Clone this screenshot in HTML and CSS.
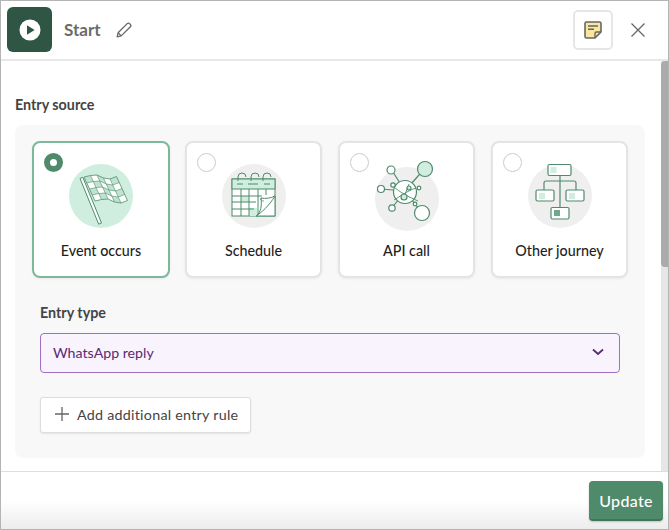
FILE: index.html
```html
<!DOCTYPE html>
<html lang="en">
<head>
    <meta name="viewport" content="width=device-width, initial-scale=1.0" />
    <title>Start</title>
    <link rel="stylesheet" href="styles.css">
</head>
<body>
    <div class="window">
        <header class="top-bar">
            <div class="step-icon">
                <svg width="22" height="22" viewBox="0 0 22 22"><circle cx="11" cy="11" r="10.5" fill="#fff"/><path d="M8 6.200v9.600l7.600-4.800z" fill="#2f5645"/></svg>
            </div>
            <span class="step-title">Start</span>
            <svg class="edit-icon" width="18" height="18" viewBox="0 0 18 18" fill="none" stroke="#666" stroke-width="1.300" stroke-linejoin="round"><path d="M2.200 15.800l.9-4L12.200 2.600a1.600 1.600 0 0 1 2.300 0l.9.9a1.600 1.600 0 0 1 0 2.300L6.200 14.900z"/><path d="M3.100 11.800l3.100 3.100"/></svg>
            <button class="note-button">
                <svg width="18" height="18" viewBox="0 0 18 18"><path d="M1 2.500A1.500 1.500 0 0 1 2.500 1h13A1.500 1.500 0 0 1 17 2.500V11l-6 6H2.500A1.500 1.500 0 0 1 1 15.500z" fill="#f9e79f" stroke="#666" stroke-width="1.600" stroke-linejoin="round"/><path d="M4 5h10M4 8.200h6" stroke="#666" stroke-width="1.400"/><path d="M11 17v-4.500a1.500 1.500 0 0 1 1.500-1.500H17" fill="none" stroke="#666" stroke-width="1.400"/></svg>
            </button>
            <svg class="close-icon" width="14" height="14" viewBox="0 0 14 14" stroke="#666" stroke-width="1.300"><path d="M.5.500l13 13M13.500.500l-13 13"/></svg>
        </header>

        <div class="body">
            <main class="scroll-area">
                <h2 class="section-title">Entry source</h2>
                <section class="panel">
                    <div class="cards">
                        <div class="card selected">
                            <span class="radio"></span>
                            <svg class="card-icon" width="64" height="64" viewBox="0 0 64 64" fill="none" stroke="#4f8a6b" stroke-width=".8">
                                <circle cx="32" cy="32" r="32" fill="#cfeee0" stroke="none"/>
                                <!-- flag cloth, checks then grid -->
                                <path d="M15 13L21.500 11.500 28 11 34.500 14 41 15 47.500 12.500 58.500 36.500 52 39 45.500 38 39 35 32.500 35.500 26 37z" fill="#fff" stroke="none"/>
                                <path d="M15 13L21.500 11.500 24.250 17.500 17.750 19zM28 11L34.500 14 37.250 20 30.750 17zM41 15L47.500 12.500 50.250 18.500 43.750 21zM24.250 17.500L30.750 17 33.500 23 27 23.500zM37.250 20L43.750 21 46.500 27 40 26zM20.500 25L27 23.500 29.750 29.500 23.250 31zM33.500 23L40 26 42.750 32 36.250 29zM46.500 27L53 24.500 55.750 30.500 49.250 33zM29.750 29.500L36.250 29 39 35 32.500 35.500zM42.750 32L49.250 33 52 39 45.500 38z" fill="#bfe3d1" stroke="none"/>
                                <path d="M15 13L21.500 11.500 28 11 34.500 14 41 15 47.500 12.500 58.500 36.500 52 39 45.500 38 39 35 32.500 35.500 26 37z"/>
                                <path d="M17.750 19L24.250 17.500 30.750 17 37.250 20 43.750 21 50.250 18.500M20.500 25L27 23.500 33.500 23 40 26 46.500 27 53 24.500M23.250 31L29.750 29.500 36.250 29 42.750 32 49.250 33 55.750 30.500M21.500 11.500L32.500 35.500M28 11L39 35M34.500 14L45.500 38M41 15L52 39" stroke-width=".6"/>
                                <path d="M11 14.500l2.800-1.200L32.500 59l-2.800 1.200z" fill="#fff" stroke-linejoin="round" stroke-width="1"/>
                            </svg>
                            <span class="card-label">Event occurs</span>
                        </div>
                        <div class="card">
                            <span class="radio"></span>
                            <svg class="card-icon" width="64" height="64" viewBox="0 0 64 64" fill="none" stroke="#4f8a6b" stroke-width="1">
                                <circle cx="32" cy="32" r="32" fill="#efefef" stroke="none"/>
                                <rect x="10" y="15" width="43" height="37" fill="#fff"/>
                                <rect x="10" y="15" width="43" height="10" fill="#cfeee0"/>
                                <path d="M19 32h8v6h-8zM27 44h8v8h-8z" fill="#cfeee0" stroke="none"/>
                                <path d="M10 32h30M10 38h24M10 45h22M19 25v27M27 25v27M36 25v27M44 25v6"/>
                                <path d="M15 20h6M26 20h10M42 20h6" stroke-width="1.200"/>
                                <path d="M16 17v-4a4 4 0 0 1 8 0M29 17v-4a4 4 0 0 1 8 0M41 17v-4a4 4 0 0 1 8 0"/>
                                <path d="M34 52c5-3 6-11 5-18 5 1 10 0 14-2-1 7-8 15-19 20z" fill="#fff"/>
                                <path d="M34 52c5-3 13-10 19-20v20z" fill="#fff"/>
                                <path d="M39 34c-1 2 1 3 3 3" stroke-width=".8"/>
                            </svg>
                            <span class="card-label">Schedule</span>
                        </div>
                        <div class="card">
                            <span class="radio"></span>
                            <svg class="card-icon" width="64" height="64" viewBox="0 0 64 64" fill="none" stroke="#4f8a6b" stroke-width="1.200">
                                <circle cx="32" cy="35" r="32" fill="#efefef" stroke="none"/>
                                <path d="M16 5l14 22M6 25l24 2M17 44l13-17M50 4L30 27M47 49L30 27"/>
                                <circle cx="50" cy="5" r="7.500" fill="#cfeee0"/>
                                <circle cx="47" cy="49" r="7.500" fill="#fff"/>
                                <circle cx="16" cy="6" r="4" fill="#fff"/>
                                <circle cx="6" cy="25" r="3.500" fill="#fff"/>
                                <circle cx="17" cy="44" r="3.200" fill="#fff"/>
                                <circle cx="30" cy="28" r="11.500" fill="#fff"/>
                                <path d="M18 22c6 6 16 11 25 15M19 36c5-3 13-9 22-12M34 20l-5 13" stroke-width=".9"/>
                                <circle cx="34" cy="24" r="2" fill="#cfeee0"/>
                                <circle cx="29" cy="33" r="3" fill="#cfeee0"/>
                                <circle cx="18" cy="21" r="2.200" fill="#fff"/>
                                <circle cx="44" cy="24" r="1.800" fill="#fff"/>
                                <circle cx="40" cy="40" r="1.800" fill="#fff"/>
                            </svg>
                            <span class="card-label">API call</span>
                        </div>
                        <div class="card">
                            <span class="radio"></span>
                            <svg class="card-icon" width="64" height="64" viewBox="0 0 64 64" fill="none" stroke="#4f8a6b" stroke-width="1.200">
                                <circle cx="32" cy="32" r="32" fill="#efefef" stroke="none"/>
                                <path d="M32 11v32M16 26v-7a2 2 0 0 1 2-2h28a2 2 0 0 1 2 2v7"/>
                                <rect x="20" y="0.500" width="23" height="11" rx="1.500" fill="#fff"/>
                                <rect x="8" y="26" width="18" height="11" rx="1.500" fill="#fff"/>
                                <rect x="38" y="26" width="18" height="11" rx="1.500" fill="#fff"/>
                                <rect x="23" y="43.500" width="18" height="11.500" rx="1.500" fill="#fff"/>
                                <path d="M22.500 3h6v6h-6zM11 29h6v6h-6zM41 29h6v6h-6z" fill="#cfeee0" stroke="none"/>
                                <path d="M26 46h6v6h-6z" fill="#6fa98c" stroke="none"/>
                            </svg>
                            <span class="card-label">Other journey</span>
                        </div>
                    </div>

                    <div class="entry-type">
                        <label class="field-label">Entry type</label>
                        <div class="select-box">
                            <span>WhatsApp reply</span>
                            <svg width="12" height="8" viewBox="0 0 12 8" fill="none" stroke="#5a2a72" stroke-width="1.800"><path d="M1 1.500l5 4.500 5-4.500"/></svg>
                        </div>
                        <button class="add-rule">
                            <svg width="14" height="14" viewBox="0 0 14 14" stroke="#666" stroke-width="1.300"><path d="M7 0v14M0 7h14"/></svg>
                            Add additional entry rule
                        </button>
                    </div>
                </section>
            </main>
            <div class="scrollbar"><div class="scroll-thumb"></div></div>
        </div>

        <footer class="bottom-bar">
            <button class="update-button">Update</button>
        </footer>
    </div>
</body>
</html>
```

FILE: styles.css
```css
* {
    box-sizing: border-box;
}
body {
    margin: 0;
    font-family: Lato, "Open Sans", sans-serif;
    color: #333;
}
button {
    font-family: inherit;
}
.window {
    width: 669px;
    height: 530px;
    display: flex;
    flex-direction: column;
    border: 1px solid #b4b4b4;
    overflow: hidden;
}

/* top bar */
.top-bar {
    height: 60px;
    flex: none;
    display: flex;
    align-items: center;
    padding: 0 23px 1px 6px;
    border-bottom: 2px solid #e8e8e8;
}
.step-icon {
    width: 45px;
    height: 45px;
    border-radius: 6px;
    background-color: #2f5645;
    display: flex;
    align-items: center;
    justify-content: center;
}
.step-title {
    margin-left: 12px;
    font-size: 17px;
    font-weight: 700;
    color: #6b6b6b;
}
.edit-icon {
    margin-left: 14px;
}
.note-button {
    margin-left: auto;
    width: 40px;
    height: 40px;
    padding: 0;
    display: flex;
    align-items: center;
    justify-content: center;
    background-color: #fff;
    border: 2px solid #e6e6e6;
    border-radius: 5px;
}
.close-icon {
    margin-left: 18px;
}

/* scrolling part */
.body {
    flex: 1;
    display: flex;
    min-height: 0;
}
.scroll-area {
    flex: 1;
    padding: 34px 16px 0 14px;
    overflow: hidden;
}
.section-title {
    margin: 0 0 11px;
    font-size: 14.3px;
    line-height: 19px;
    font-weight: 700;
    color: #444;
}
.panel {
    height: 333px;
    padding: 16px 16px 0 17px;
    background-color: #f8f8f8;
    border-radius: 8px;
}
.cards {
    display: flex;
    gap: 16px;
}
.card {
    position: relative;
    width: 137px;
    height: 137px;
    display: flex;
    flex-direction: column;
    align-items: center;
    padding-top: 21px;
    background-color: #fff;
    border: 2px solid #e4e4e4;
    border-radius: 8px;
    box-shadow: 0 1px 3px rgba(0, 0, 0, 0.06);
}
.card.selected {
    width: 138px;
    margin-right: -1px;
    border-color: #7db89c;
}
.card-icon {
    overflow: visible;
}
.card-label {
    margin-top: 14px;
    font-size: 14.3px;
    font-weight: 500;
    color: #1f1f1f;
}
.radio {
    position: absolute;
    top: 10px;
    left: 10px;
    width: 19px;
    height: 19px;
    background-color: #fff;
    border: 1.5px solid #ccc;
    border-radius: 50%;
}
.selected .radio {
    background-color: #fff;
    border: 6px solid #4f8a6b;
}

/* entry type */
.entry-type {
    margin-top: 26px;
    padding-left: 8px;
}
.field-label {
    display: block;
    font-size: 14.3px;
    line-height: 18px;
    font-weight: 700;
    color: #444;
}
.select-box {
    width: 580px;
    height: 40px;
    margin-top: 11px;
    padding: 0 15px 2px 12px;
    display: flex;
    align-items: center;
    justify-content: space-between;
    font-size: 14.2px;
    color: #5a2a72;
    background-color: #f9f3fe;
    border: 1.5px solid #a06fc4;
    border-radius: 4px;
}
.add-rule {
    width: 211px;
    height: 36px;
    margin-top: 24px;
    padding: 0 0 2px 14px;
    display: flex;
    align-items: center;
    gap: 8px;
    font-size: 14.3px;
    letter-spacing: 0.25px;
    color: #444;
    background-color: #fff;
    border: 1px solid #ddd;
    border-radius: 3px;
    box-shadow: 0 1px 2px rgba(0, 0, 0, 0.08);
}
.scrollbar {
    width: 7px;
    flex: none;
    background-color: #e6e6e6;
}
.scroll-thumb {
    height: 206px;
    background-color: #ababab;
    border-radius: 4px 0 0 4px;
}

/* footer */
.bottom-bar {
    height: 58px;
    flex: none;
    display: flex;
    justify-content: flex-end;
    align-items: flex-start;
    padding: 9px 5px 0 0;
    background: linear-gradient(#fff 50%, #ececec);
    border-top: 1px solid #ddd;
}
.update-button {
    width: 74px;
    height: 40px;
    font-size: 16px;
    font-weight: 500;
    letter-spacing: 0.3px;
    color: #fff;
    background-color: #4f8a6b;
    border: none;
    border-bottom: 2px solid #41745a;
    border-radius: 4px;
    box-shadow: 0 1px 2px rgba(0, 0, 0, 0.2);
}
```
